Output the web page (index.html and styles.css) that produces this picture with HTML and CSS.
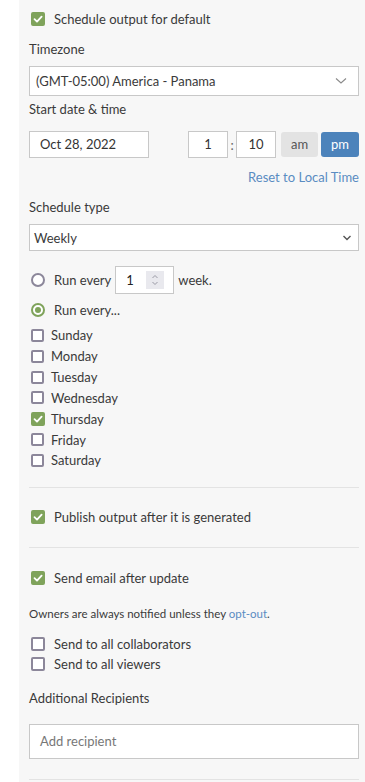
FILE: index.html
```html
<!DOCTYPE html>
<html>
<head>
<meta charset="utf-8">
<link rel="stylesheet" href="styles.css">
</head>
<body>
<div class="panel">
  <div class="check-row top-row"><span class="cb checked"><svg viewBox="0 0 14 14"><path d="M3.5 7.2 L6 9.6 L10.6 4.6" /></svg></span><span>Schedule output for default</span></div>

  <div class="label tz-label">Timezone</div>
  <div class="select tz-select"><span>(GMT-05:00) America - Panama</span><svg class="chev" viewBox="0 0 12 8"><path d="M1 1.5 L6 6 L11 1.5"/></svg></div>

  <div class="label start-label">Start date &amp; time</div>
  <div class="date-row">
    <div class="box date">Oct 28, 2022</div>
    <div class="time">
      <div class="box num">1</div>
      <span class="colon">:</span>
      <div class="box num">10</div>
      <div class="btn am">am</div>
      <div class="btn pm">pm</div>
    </div>
  </div>
  <div class="reset">Reset to Local Time</div>

  <div class="label st-label">Schedule type</div>
  <div class="select weekly"><span>Weekly</span><svg class="chev2" viewBox="0 0 10 6"><path d="M1.5 1 L5 4.5 L8.5 1"/></svg></div>

  <div class="radio-row run1"><span class="radio"></span><span>Run every</span><div class="numbox"><span>1</span><span class="spin"><svg viewBox="0 0 10 16"><path d="M2.5 6 L5 3.5 L7.5 6 M2.5 10 L5 12.5 L7.5 10"/></svg></span></div><span>week.</span></div>
  <div class="radio-row run2"><span class="radio on"></span><span>Run every...</span></div>

  <div class="days">
    <div class="day"><span class="cb"></span>Sunday</div>
    <div class="day"><span class="cb"></span>Monday</div>
    <div class="day"><span class="cb"></span>Tuesday</div>
    <div class="day"><span class="cb"></span>Wednesday</div>
    <div class="day"><span class="cb checked"><svg viewBox="0 0 14 14"><path d="M3.5 7.2 L6 9.6 L10.6 4.6" /></svg></span>Thursday</div>
    <div class="day"><span class="cb"></span>Friday</div>
    <div class="day"><span class="cb"></span>Saturday</div>
  </div>

  <div class="divider d1"></div>
  <div class="check-row publish"><span class="cb checked"><svg viewBox="0 0 14 14"><path d="M3.5 7.2 L6 9.6 L10.6 4.6" /></svg></span><span>Publish output after it is generated</span></div>
  <div class="divider d2"></div>
  <div class="check-row email"><span class="cb checked"><svg viewBox="0 0 14 14"><path d="M3.5 7.2 L6 9.6 L10.6 4.6" /></svg></span><span>Send email after update</span></div>

  <div class="note">Owners are always notified unless they <span class="link">opt-out</span>.</div>

  <div class="send">
    <div class="check-row"><span class="cb"></span><span>Send to all collaborators</span></div>
    <div class="check-row"><span class="cb"></span><span>Send to all viewers</span></div>
  </div>

  <div class="label ar-label">Additional Recipients</div>
  <div class="box recipient">Add recipient</div>
  <div class="divider d3"></div>
</div>
</body>
</html>
```

FILE: styles.css
```css
* { box-sizing: border-box; }
html, body { margin: 0; padding: 0; background: #fff; }
body {
  font-family: Lato, "Noto Sans", sans-serif;
  font-size: 13px;
  color: #3a3a3a;
  overflow: hidden;
}
.panel {
  margin-left: 19px;
  background: #f7f7f7;
  padding: 9px 6px 20px 10px;
  min-height: 782px;
  display: flex;
  flex-direction: column;
}
.check-row {
  display: flex;
  align-items: center;
  height: 20px;
  line-height: 20px;
}
.cb {
  width: 14px;
  height: 14px;
  border: 2px solid #8c879a;
  border-radius: 2px;
  margin-left: 2px;
  flex: none;
  display: inline-flex;
  align-items: center;
  justify-content: center;
  background: #fff;
}
.cb.checked {
  background: #7fa35b;
  border-color: #7fa35b;
}
.cb svg { width: 14px; height: 14px; flex: none; }
.cb svg path { fill: none; stroke: #fff; stroke-width: 1.8; stroke-linecap: round; stroke-linejoin: round; }
.check-row .cb { margin-right: 9px; }

.label { line-height: 18px; height: 18px; }
.tz-label { margin-top: 11px; }
.select {
  background: #fff;
  border: 1px solid #c8c8c8;
  display: flex;
  align-items: center;
  justify-content: space-between;
}
.tz-select { margin-top: 8px; height: 30px; padding: 0 11px 0 6px; }
.chev { width: 12px; height: 8px; }
.chev path { fill: none; stroke: #8a8a8a; stroke-width: 1.1; }
.start-label { margin-top: 4px; }

.date-row {
  margin-top: 13px;
  display: flex;
  justify-content: space-between;
  align-items: center;
  height: 27px;
}
.box {
  background: #fff;
  border: 1px solid #c8c8c8;
  height: 27px;
  line-height: 25px;
}
.date { width: 120px; padding-left: 10px; color: #333; }
.time { display: flex; align-items: center; }
.num { width: 40px; text-align: center; color: #333; }
.colon { width: 8px; text-align: center; color: #666; }
.btn {
  height: 25px;
  line-height: 25px;
  border-radius: 3px;
  text-align: center;
}
.am { width: 37px; margin-left: 5px; background: #e3e3e3; color: #555; }
.pm { width: 38px; margin-left: 3px; background: #4c83bb; color: #fff; }
.reset {
  margin-top: 10px;
  line-height: 18px;
  text-align: right;
  color: #5a8cc2;
}
.st-label { margin-top: 12px; }
.weekly { margin-top: 8px; height: 27px; padding: 0 6px 0 4px; }
.chev2 { width: 10px; height: 6px; }
.chev2 path { fill: none; stroke: #555; stroke-width: 1.4; }

.radio-row { display: flex; align-items: center; }
.radio {
  width: 14px; height: 14px;
  border: 2px solid #8c879a;
  border-radius: 50%;
  margin-left: 2px;
  margin-right: 9px;
  background: #fff;
  flex: none;
  position: relative;
}
.radio.on { border-color: #7fa35b; }
.radio.on::after {
  content: "";
  position: absolute;
  left: 2px; top: 2px;
  width: 6px; height: 6px;
  border-radius: 50%;
  background: #7fa35b;
}
.run1 { margin-top: 15px; height: 28px; }
.numbox {
  margin-left: 4px;
  width: 59px;
  height: 28px;
  background: #fff;
  border: 1px solid #c8c8c8;
  display: flex;
  align-items: center;
  padding-left: 10px;
  margin-right: 4px;
  color: #222;
}
.numbox > span:first-child { width: 20px; }
.spin {
  width: 18px; height: 18px;
  background: #e9e9ee;
  display: flex; align-items: center; justify-content: center;
}
.spin svg { width: 10px; height: 16px; }
.spin path { fill: none; stroke: #9a9aa5; stroke-width: 1; }
.run2 { margin-top: 6px; height: 20px; }

.days { margin-top: 5px; }
.day {
  display: flex;
  align-items: center;
  height: 20.85px;
}
.day .cb { margin-right: 7px; width: 13px; height: 13px; }
.day .cb.checked { width: 14px; height: 14px; margin-right: 6px; }

.divider { height: 1px; background: #e3e3e3; }
.d1 { margin-top: 16px; }
.publish { margin-top: 19px; }
.d2 { margin-top: 20px; }
.email { margin-top: 20px; }
.note {
  margin-top: 18px;
  font-size: 11.5px;
  line-height: 16px;
  color: #3a3a3a;
}
.link { color: #5a8cc2; }
.send { margin-top: 12px; }
.ar-label { margin-top: 15px; }
.recipient {
  margin-top: 17px;
  height: 35px;
  line-height: 33px;
  padding-left: 10px;
  color: #777;
}
.d3 { margin-top: 20px; }
```
